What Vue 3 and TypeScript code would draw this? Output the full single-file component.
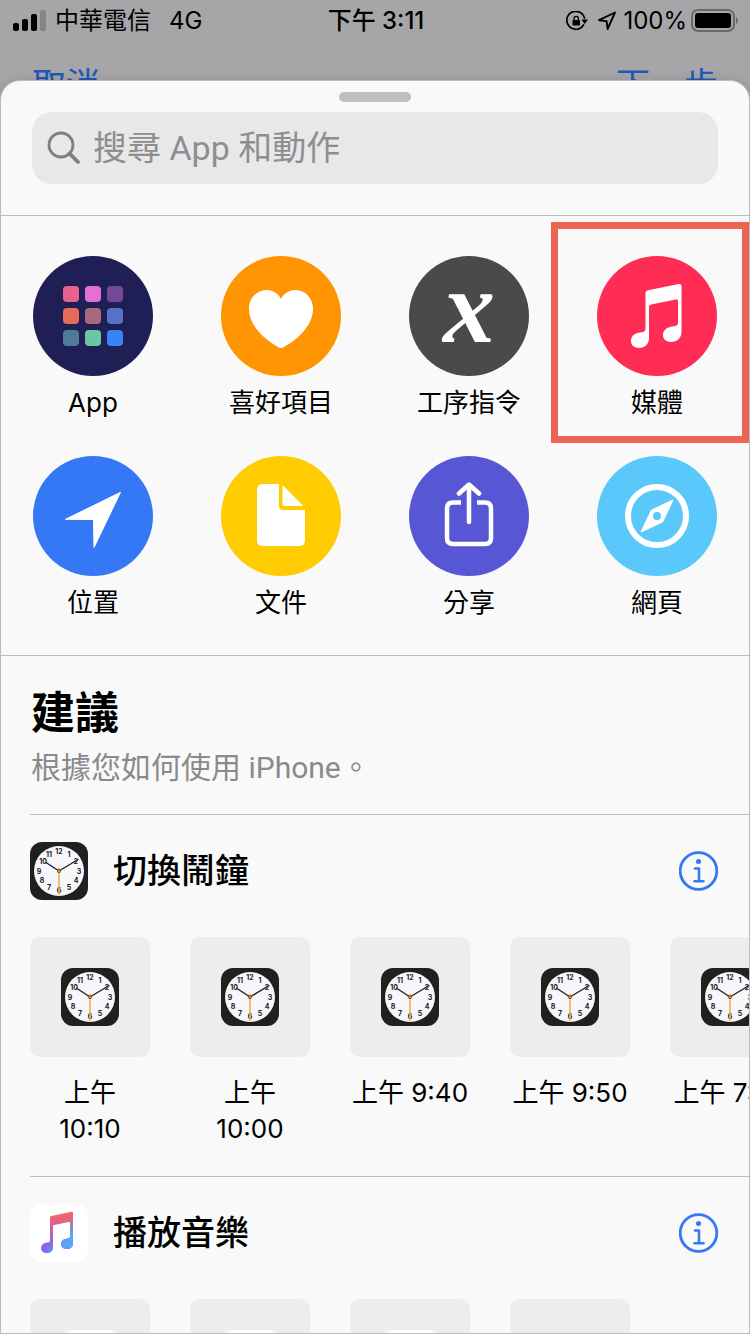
<script setup lang="ts">
import { h } from 'vue'

interface Category {
  id: string
  label: string
  color: string
  highlighted?: boolean
}

interface Suggestion {
  id: string
  title: string
  items: { label: string; icon: boolean }[]
}

const categories: Category[] = [
  { id: 'apps', label: 'App', color: '#1f1f56' },
  { id: 'heart', label: '喜好項目', color: '#ff9502' },
  { id: 'script', label: '工序指令', color: '#4a4a4a' },
  { id: 'media', label: '媒體', color: '#ff2d55', highlighted: true },
  { id: 'location', label: '位置', color: '#3478f6' },
  { id: 'document', label: '文件', color: '#ffcc02' },
  { id: 'share', label: '分享', color: '#5756d5' },
  { id: 'web', label: '網頁', color: '#5ac8fa' },
]

const appColors: string[] = [
  '#e6648c', '#e56fd2', '#724999',
  '#e66b5a', '#a8687e', '#5872c8',
  '#4f7b9b', '#6bc6a5', '#3a82f7',
]

const suggestions: Suggestion[] = [
  {
    id: 'alarm',
    title: '切換鬧鐘',
    items: [
      { label: '上午 10:10', icon: true },
      { label: '上午 10:00', icon: true },
      { label: '上午 9:40', icon: true },
      { label: '上午 9:50', icon: true },
      { label: '上午 7:30', icon: true },
    ],
  },
  {
    id: 'music',
    title: '播放音樂',
    items: [
      { label: '', icon: true },
      { label: '', icon: true },
      { label: '', icon: true },
      { label: '', icon: false },
    ],
  },
]

const numerals: [number, number, number][] = [
  [12, 29, 12], [1, 39, 15], [2, 46, 22], [3, 49, 32],
  [4, 46, 41], [5, 39, 48], [6, 29, 51], [7, 19, 48],
  [8, 12, 41], [9, 9, 32], [10, 13, 22], [11, 19, 15],
]

const iconBox = { width: 58, height: 58, viewBox: '0 0 58 58', 'aria-hidden': 'true' }

const ClockIcon = () =>
  h('svg', iconBox, [
    h('rect', { width: 58, height: 58, rx: 12, fill: '#202020' }),
    h('circle', { cx: 29, cy: 29, r: 25, fill: '#f7f7fb' }),
    ...numerals.map(([n, x, y]) =>
      h('text', { x, y, 'text-anchor': 'middle', class: 'clock-numeral' }, String(n)),
    ),
    h('path', {
      d: 'M29 29L16 20.5M29 29L48 17.5',
      stroke: '#202020',
      'stroke-width': 1.4,
      'stroke-linecap': 'round',
    }),
    h('path', { d: 'M29 26V53', stroke: '#f0aa46', 'stroke-opacity': 0.75, 'stroke-width': 2 }),
    h('circle', { cx: 29, cy: 29, r: 2, fill: '#7a5220' }),
    h('circle', { cx: 29, cy: 29, r: 1, fill: '#f0a030' }),
  ])

const MusicIcon = () =>
  h('svg', iconBox, [
    h('rect', { width: 58, height: 58, rx: 12, fill: '#fff' }),
    h('use', { href: '#note-shape', fill: 'url(#note-base)' }),
    h('use', { href: '#note-shape', fill: 'url(#note-blue)' }),
  ])

const iconFor = (id: string) => (id === 'alarm' ? ClockIcon : MusicIcon)
</script>

<template>
  <div class="screen">
    <svg class="defs" width="0" height="0" aria-hidden="true">
      <defs>
        <linearGradient id="note-base" gradientUnits="userSpaceOnUse" x1="0" y1="12" x2="0" y2="46">
          <stop offset="0" stop-color="#f4626a" />
          <stop offset="1" stop-color="#8064fa" />
        </linearGradient>
        <linearGradient id="note-blue" gradientUnits="userSpaceOnUse" x1="24" y1="18" x2="40" y2="32">
          <stop offset="0.5" stop-color="#5aa5f6" stop-opacity="0" />
          <stop offset="1" stop-color="#5aa5f6" />
        </linearGradient>
        <path
          id="note-shape"
          d="M20 13.5Q20 12.2 21.3 11.9L41.8 7.8Q43 7.6 43 8.8V39.5C43 43 40.4 45 37 45C33.5 45 31 43 31 40C31 37 33.2 35.2 36 34.7L38.5 34.3Q40 34 40 32.5V17.8L23 21.2V43.5C23 47 20.4 49 17 49C13.5 49 11 47 11 44C11 41 13.2 39.2 16 38.700L18.5 38.3Q20 38 20 36.5Z"
        />
      </defs>
    </svg>

    <div class="status">
      <div class="status-side">
        <svg class="signal" width="33" height="22" viewBox="0 0 33 22" aria-hidden="true">
          <rect x="0" y="13" width="6" height="8" rx="2" />
          <rect x="9" y="9" width="6" height="12" rx="2" />
          <rect x="18" y="4" width="6" height="17" rx="2" />
          <rect x="27" y="0" width="6" height="21" rx="2" fill="#858587" />
        </svg>
        <span>中華電信</span>
        <span class="network">4G</span>
      </div>
      <time class="clock">下午 3:11</time>
      <div class="status-side status-right">
        <svg width="22" height="20" viewBox="0 0 22 20" fill="none" stroke="#000" aria-hidden="true">
          <path d="M18.500 7A9 9 0 1 0 17.500 14" stroke-width="1.700" stroke-linecap="round" />
          <path d="M15.500 8.500H22L18.700 13Z" fill="#000" stroke="none" />
          <rect x="6.500" y="9" width="7.500" height="5.500" rx="1" fill="#000" stroke="none" />
          <path d="M8 9.500V7.500A2.200 2.200 0 0 1 12.400 7.500V9.500" stroke-width="1.300" />
        </svg>
        <svg class="nav-arrow" width="20" height="20" viewBox="0 0 20 20" aria-hidden="true">
          <path d="M18 1.500L2 9.200L9.600 10.100L10.600 18Z" fill="none" stroke="#000" stroke-width="1.900" stroke-linejoin="round" />
        </svg>
        <span class="percent">100%</span>
        <svg width="48" height="24" viewBox="0 0 48 24" aria-hidden="true">
          <rect x="1" y="1" width="42" height="21" rx="6" fill="none" stroke="#69696a" stroke-width="2" />
          <rect x="4" y="4" width="36" height="15" rx="3" />
          <path d="M45 8Q47 9 47 11.500T45 15Z" fill="#69696a" />
        </svg>
      </div>
    </div>

    <nav class="nav">
      <button type="button">取消</button>
      <button type="button">下一步</button>
    </nav>

    <main class="sheet">
      <header class="top">
        <div class="grabber"></div>
        <label class="search">
          <svg width="34" height="34" viewBox="0 0 34 34" fill="none" stroke="#7f7f81" aria-hidden="true">
            <circle cx="14" cy="14" r="12" stroke-width="2.800" />
            <path d="M22.500 22.500L31 31" stroke-width="3.800" stroke-linecap="round" />
          </svg>
          <input type="search" placeholder="搜尋 App 和動作" aria-label="搜尋 App 和動作" />
        </label>
      </header>

      <section class="categories">
        <button v-for="c in categories" :key="c.id" type="button" class="category">
          <svg width="120" height="120" viewBox="0 0 120 120" aria-hidden="true">
            <circle cx="60" cy="60" r="60" :fill="c.color" />
            <g v-if="c.id === 'apps'">
              <rect
                v-for="(color, i) in appColors"
                :key="i"
                :x="30 + (i % 3) * 22"
                :y="30 + Math.floor(i / 3) * 22"
                width="16"
                height="16"
                rx="4"
                :fill="color"
              />
            </g>
            <path
              v-else-if="c.id === 'heart'"
              fill="#fff"
              d="M60 42.700C57 37 51 34 46 34C35.500 34 28 42 28 53C28 68 41 82 57 91Q60 92.800 63 91C79 82 92 68 92 53C92 42 84.500 34 74 34C69 34 63 37 60 42.700Z"
            />
            <text v-else-if="c.id === 'script'" class="variable" x="60" y="86" text-anchor="middle">x</text>
            <path
              v-else-if="c.id === 'media'"
              fill="#fff"
              d="M48.500 37Q48.500 34.700 51 34.200L82 28Q84.500 27.500 84.500 30V76C84.500 82 80 86 74 86C69 86 66 83 66 79C66 74.500 69.500 71.500 74 70.700L78.500 70Q81 69.500 81 67V45Q81 43 79 43.400L54 48.400Q52 48.800 52 50.800V82C52 88 48 92 42 92C37 92 34 89 34 85C34 80.500 37 77.500 41.500 76.700L46 75.900Q48.500 75.500 48.500 73Z"
            />
            <path
              v-else-if="c.id === 'location'"
              fill="#fff"
              stroke="#fff"
              stroke-linejoin="round"
              d="M87.500 36.300L32.500 63.300L60.500 63.500L61 91.500Z"
            />
            <g v-else-if="c.id === 'document'" fill="#fff">
              <path d="M42 28H58V50Q58 54 62 54H84V84Q84 90 78 90H42Q36 90 36 84V34Q36 28 42 28Z" />
              <path d="M61.500 31Q61.500 29 63 30.500L81.500 49Q82.500 50 81 50H63Q61.500 50 61.500 48.500Z" />
            </g>
            <g v-else-if="c.id === 'share'" fill="none" stroke="#fff" stroke-width="4.500">
              <path d="M52 46.500H44Q38 46.500 38 52.500V82Q38 88 44 88H76Q82 88 82 82V52.500Q82 46.500 76 46.500H68" />
              <path d="M60 29V66M50 37.500L60 28.500L70 37.500" stroke-linecap="round" stroke-linejoin="round" />
            </g>
            <g v-else>
              <circle cx="60" cy="60" r="29" fill="none" stroke="#fff" stroke-width="6" />
              <path d="M75.500 44.500L54.500 54.500L44.500 75.500L65.500 65.500Z" fill="#fff" stroke="#fff" stroke-width="1.500" stroke-linejoin="round" />
              <circle cx="60" cy="60" r="4" :fill="c.color" />
            </g>
          </svg>
          <span class="category-label">{{ c.label }}</span>
          <span v-if="c.highlighted" class="highlight"></span>
        </button>
      </section>

      <section class="intro">
        <h1>建議</h1>
        <p>根據您如何使用 iPhone。</p>
      </section>

      <section v-for="s in suggestions" :key="s.id" class="suggestion">
        <div class="suggestion-head">
          <component :is="iconFor(s.id)" />
          <h2>{{ s.title }}</h2>
          <button type="button" class="info" :aria-label="s.title">
            <svg width="40" height="40" viewBox="0 0 40 40" fill="none" stroke="#3478f6" aria-hidden="true">
              <circle cx="19.500" cy="20" r="18.300" stroke-width="2.800" />
              <circle cx="19.500" cy="10.500" r="2.500" fill="#3478f6" stroke="none" />
              <path d="M16 17.500H20V30M15.500 30.200H24.500" stroke-width="2.600" stroke-linecap="round" stroke-linejoin="round" />
            </svg>
          </button>
        </div>
        <div class="tiles">
          <button v-for="(item, i) in s.items" :key="i" type="button" class="tile">
            <span class="tile-box">
              <component :is="iconFor(s.id)" v-if="item.icon" />
            </span>
            <span class="tile-label">{{ item.label }}</span>
          </button>
        </div>
      </section>
    </main>
  </div>
</template>

<style>
body {
  margin: 0;
}

.clock-numeral {
  fill: #202020;
  font: bold 7px Inter, sans-serif;
}
</style>

<style scoped>
* {
  box-sizing: border-box;
}

.screen {
  display: flex;
  flex-direction: column;
  height: 100vh;
  overflow: hidden;
  background: #a6a6a8;
  color: #000;
  font-family: Inter, "Noto Sans CJK TC", sans-serif;
}

.defs {
  position: absolute;
}

button {
  padding: 0;
  border: 0;
  background: none;
  color: inherit;
  font: inherit;
}

.status {
  display: grid;
  grid-template-columns: 1fr auto 1fr;
  align-items: center;
  flex: none;
  height: 40px;
  padding: 0 11px 0 13px;
  font-size: 24px;
  line-height: 42px;
}

.status-side {
  display: flex;
  align-items: center;
}

.signal {
  margin-right: 9px;
}

.network {
  margin-left: 18px;
}

.clock {
  font-weight: 500;
}

.status-right {
  justify-content: flex-end;
}

.nav-arrow {
  margin: 0 6px 0 9px;
}

.percent {
  margin-right: 4px;
}

.nav {
  display: flex;
  justify-content: space-between;
  align-items: flex-start;
  flex: none;
  height: 40px;
  padding: 20px 32px 0;
  overflow: hidden;
  color: #2358b4;
  font-size: 34px;
  line-height: 50px;
}

.sheet {
  flex: 1;
  min-height: 0;
  overflow: hidden;
  border: 1px solid #bcbcbe;
  border-radius: 20px 20px 0 0;
  background: #f9f9f9;
  box-shadow: 0 0 12px rgba(0, 0, 0, 0.12);
}

.top {
  padding: 11px 31px 31px;
  border-bottom: 1px solid #bdbdbf;
}

.grabber {
  width: 72px;
  height: 10px;
  margin: 0 auto 10px;
  border-radius: 5px;
  background: #bfbfc1;
}

.search {
  display: flex;
  align-items: center;
  gap: 12px;
  height: 72px;
  padding: 0 15px;
  border-radius: 20px;
  background: #e8e8e8;
}

.search input {
  flex: 1;
  min-width: 0;
  height: 60px;
  padding: 0;
  border: 0;
  outline: 0;
  background: transparent;
  font-family: Roboto, "Noto Sans CJK TC", sans-serif;
  font-size: 34px;
}

.search input::placeholder {
  color: #8e8e92;
  opacity: 1;
}

.categories {
  display: grid;
  grid-template-columns: repeat(4, 120px);
  justify-content: space-between;
  row-gap: 26px;
  padding: 40px 32px 25px;
  border-bottom: 1px solid #bdbdbf;
}

.category {
  position: relative;
  display: flex;
  flex-direction: column;
  align-items: center;
}

.category-label {
  font-size: 26px;
  line-height: 54px;
  white-space: nowrap;
}

.highlight {
  position: absolute;
  inset: -34px -32px -13px -46px;
  border: 7px solid #ec6453;
}

.variable {
  fill: #fff;
  font: italic bold 104px "Liberation Serif", serif;
}

.intro {
  padding: 27px 30px 26px;
}

h1 {
  margin: 0 0 5px;
  font-size: 44px;
  font-weight: 600;
  line-height: 60px;
}

p {
  margin: 0;
  color: #8a8a8e;
  font-family: Roboto, "Noto Sans CJK TC", sans-serif;
  font-size: 30px;
  line-height: 40px;
}

.suggestion {
  margin-left: 29px;
  padding: 27px 0 29px;
  border-top: 1px solid #bdbdbf;
}

.suggestion-head {
  display: flex;
  align-items: center;
  padding-right: 30px;
  margin-bottom: 37px;
}

h2 {
  flex: 1;
  margin: 0 0 0 25px;
  font-size: 34px;
  font-weight: 500;
  line-height: 58px;
}

.info {
  display: flex;
}

.tiles {
  display: flex;
  align-items: flex-start;
  gap: 40px;
  overflow: hidden;
}

.tile {
  flex: 0 0 120px;
}

.tile-box {
  display: flex;
  align-items: center;
  justify-content: center;
  height: 120px;
  margin-bottom: 18px;
  border-radius: 10px;
  background: #ededed;
}

.tile-label {
  display: block;
  font-size: 26px;
  line-height: 36px;
}
</style>
